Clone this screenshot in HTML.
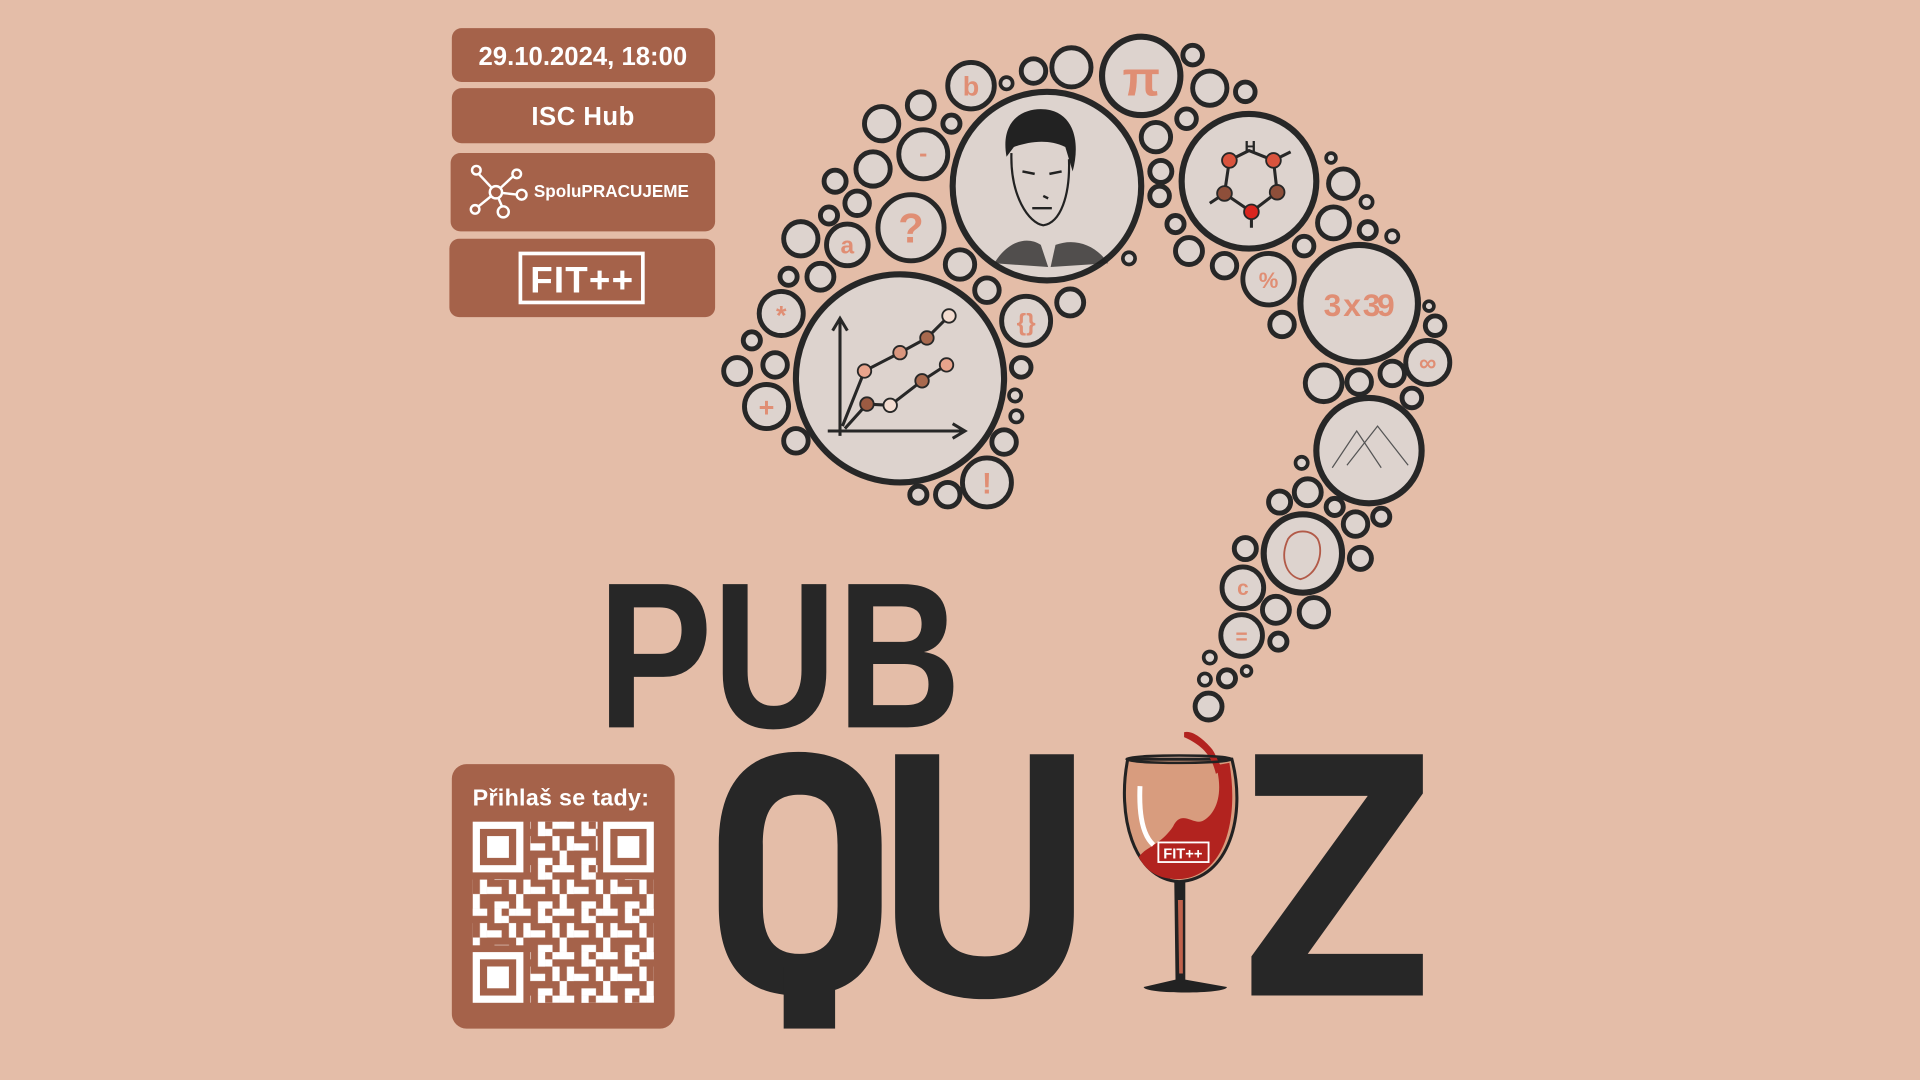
<!DOCTYPE html>
<html><head><meta charset="utf-8"><style>
html,body{margin:0;padding:0;background:#E4BDA8;}
svg{display:block}
text{font-family:"Liberation Sans",sans-serif;font-weight:bold}
</style></head><body>
<svg width="1920" height="1080" viewBox="0 0 1568 882" xmlns="http://www.w3.org/2000/svg">
<defs>
<pattern id="qp" x="386" y="671" width="35.52" height="35.52" patternUnits="userSpaceOnUse">
<g fill="#fff">
<rect x="0" y="0" width="11.9" height="5.9"/><rect x="17.8" y="0" width="5.9" height="11.9"/><rect x="29.6" y="0" width="5.9" height="5.9"/>
<rect x="5.9" y="11.8" width="5.9" height="11.9"/><rect x="11.8" y="17.7" width="11.9" height="5.9"/><rect x="29.6" y="11.8" width="5.9" height="11.9"/>
<rect x="0" y="23.6" width="5.9" height="11.9"/><rect x="17.8" y="29.6" width="11.9" height="5.9"/><rect x="23.7" y="5.9" width="5.9" height="5.9"/>
</g>
</pattern>
</defs>
<rect width="1568" height="882" fill="#E4BDA8"/>
<!-- left boxes -->
<g fill="#A5624A">
<rect x="369" y="23" width="215" height="44" rx="8"/>
<rect x="369" y="72" width="215" height="45" rx="8"/>
<rect x="368" y="125" width="216" height="64" rx="8"/>
<rect x="367" y="195" width="217" height="64" rx="8"/>
<rect x="369" y="624" width="182" height="216" rx="12"/>
</g>
<text x="476" y="53" font-size="21" fill="#fff" text-anchor="middle">29.10.2024, 18:00</text>
<text x="476" y="102" font-size="21" fill="#fff" text-anchor="middle" textLength="84">ISC Hub</text>
<g stroke="#fff" stroke-width="2" fill="none">
<line x1="390" y1="141" x2="405" y2="157"/><line x1="405" y1="157" x2="420" y2="143"/><line x1="405" y1="157" x2="389" y2="170"/><line x1="405" y1="157" x2="423" y2="159"/><line x1="405" y1="157" x2="411" y2="171"/>
<circle cx="389" cy="139" r="3.5" fill="#A5624A"/><circle cx="422" cy="142" r="3.5" fill="#A5624A"/><circle cx="405" cy="157" r="5" fill="#A5624A"/><circle cx="426" cy="159" r="4" fill="#A5624A"/><circle cx="388" cy="171" r="3.5" fill="#A5624A"/><circle cx="411" cy="173" r="4.5" fill="#A5624A"/>
</g>
<text x="436" y="161" font-size="14" fill="#fff">SpoluPRACUJEME</text>
<rect x="425" y="207" width="100" height="40" fill="none" stroke="#fff" stroke-width="3"/>
<text x="475" y="239" font-size="30" fill="#fff" text-anchor="middle" font-weight="normal" textLength="84">FIT++</text>
<text x="458" y="658" font-size="19" fill="#fff" text-anchor="middle" textLength="144">Přihlaš se tady:</text>
<!-- QR -->
<rect x="386" y="671" width="148" height="148" fill="url(#qp)"/>
<g fill="#A5624A"><rect x="384" y="669" width="49" height="49"/><rect x="488" y="669" width="48" height="49"/><rect x="384" y="772" width="49" height="49"/></g>
<g fill="none" stroke="#fff" stroke-width="5.9">
<rect x="389" y="674" width="35.5" height="35.5"/><rect x="495.5" y="674" width="35.5" height="35.5"/><rect x="389" y="780.5" width="35.5" height="35.5"/>
</g>
<g fill="#fff"><rect x="397.8" y="682.8" width="17.8" height="17.8"/><rect x="504.3" y="682.8" width="17.8" height="17.8"/><rect x="397.8" y="789.3" width="17.8" height="17.8"/></g>

<!-- bubbles -->
<g stroke="#272727" fill="#DDD3CE" stroke-width="5">
<circle cx="735" cy="309" r="85"/><circle cx="855" cy="152" r="77"/><circle cx="1020" cy="148" r="55"/><circle cx="1110" cy="248" r="48"/><circle cx="1118" cy="368" r="43"/><circle cx="1064" cy="452" r="32"/><circle cx="932" cy="62" r="32"/>
</g>
<g stroke="#272727" fill="#DDD3CE" stroke-width="4">
<circle cx="744" cy="186" r="27"/><circle cx="793" cy="70" r="19"/><circle cx="754" cy="126" r="20"/><circle cx="692" cy="200" r="17"/><circle cx="638" cy="256" r="18"/><circle cx="626" cy="332" r="18"/><circle cx="838" cy="262" r="20"/><circle cx="806" cy="394" r="20"/><circle cx="1036" cy="228" r="21"/><circle cx="1166" cy="296" r="18"/><circle cx="1015" cy="480" r="17"/><circle cx="1014" cy="519" r="17"/>
<circle cx="875" cy="55" r="16"/><circle cx="844" cy="58" r="10"/><circle cx="720" cy="101" r="14"/><circle cx="752" cy="86" r="11"/><circle cx="713" cy="138" r="14"/><circle cx="682" cy="148" r="9"/><circle cx="700" cy="166" r="10"/><circle cx="654" cy="195" r="14"/><circle cx="670" cy="226" r="11"/><circle cx="633" cy="298" r="10"/><circle cx="602" cy="303" r="11"/><circle cx="650" cy="360" r="10"/><circle cx="774" cy="404" r="10"/><circle cx="820" cy="361" r="10"/><circle cx="834" cy="300" r="8"/><circle cx="806" cy="237" r="10"/><circle cx="784" cy="216" r="12"/><circle cx="874" cy="247" r="11"/><circle cx="944" cy="112" r="12"/><circle cx="948" cy="140" r="9"/><circle cx="947" cy="160" r="8"/><circle cx="971" cy="205" r="11"/><circle cx="1000" cy="217" r="10"/><circle cx="974" cy="45" r="8"/><circle cx="988" cy="72" r="14"/><circle cx="1017" cy="75" r="8"/><circle cx="969" cy="97" r="8"/><circle cx="1097" cy="150" r="12"/><circle cx="1089" cy="182" r="13"/><circle cx="1117" cy="188" r="7"/><circle cx="1065" cy="201" r="8"/><circle cx="1047" cy="265" r="10"/><circle cx="1081" cy="313" r="15"/><circle cx="1110" cy="312" r="10"/><circle cx="1137" cy="305" r="10"/><circle cx="1153" cy="325" r="8"/><circle cx="1172" cy="266" r="8"/><circle cx="1068" cy="402" r="11"/><circle cx="1045" cy="410" r="9"/><circle cx="1090" cy="414" r="7"/><circle cx="1107" cy="428" r="10"/><circle cx="1128" cy="422" r="7"/><circle cx="1111" cy="456" r="9"/><circle cx="1017" cy="448" r="9"/><circle cx="1042" cy="498" r="11"/><circle cx="1073" cy="500" r="12"/><circle cx="1044" cy="524" r="7"/><circle cx="1002" cy="554" r="7"/><circle cx="987" cy="577" r="11"/><circle cx="960" cy="183" r="7"/><circle cx="777" cy="101" r="7"/><circle cx="677" cy="176" r="7"/><circle cx="644" cy="226" r="7"/><circle cx="614" cy="278" r="7"/><circle cx="750" cy="404" r="7"/>
</g>
<g stroke="#272727" fill="#DDD3CE" stroke-width="3">
<circle cx="822" cy="68" r="5"/><circle cx="830" cy="340" r="5"/><circle cx="829" cy="323" r="5"/><circle cx="922" cy="211" r="5"/><circle cx="1087" cy="129" r="4"/><circle cx="1116" cy="165" r="5"/><circle cx="1137" cy="193" r="5"/><circle cx="1167" cy="250" r="4"/><circle cx="1063" cy="378" r="5"/><circle cx="988" cy="537" r="5"/><circle cx="1018" cy="548" r="4"/><circle cx="984" cy="555" r="5"/>
</g>

<!-- graph -->
<g stroke="#272727" stroke-width="2.5" fill="none">
<line x1="686" y1="262" x2="686" y2="356"/><polyline points="680,270 686,260 692,270"/>
<line x1="676" y1="352" x2="786" y2="352"/><polyline points="778,346 788,352 778,358"/>
<polyline points="688,348 706,303 735,288 757,276 775,258"/>
<polyline points="690,350 708,330 727,331 753,311 773,298"/>
</g>
<g stroke="#272727" stroke-width="1.5">
<circle cx="706" cy="303" r="5.5" fill="#E9A48C"/><circle cx="735" cy="288" r="5.5" fill="#D9967E"/><circle cx="757" cy="276" r="5.5" fill="#A8694E"/><circle cx="775" cy="258" r="5.5" fill="#F3DCD0"/>
<circle cx="708" cy="330" r="5.5" fill="#9C5B42"/><circle cx="727" cy="331" r="5.5" fill="#F3DCD0"/><circle cx="753" cy="311" r="5.5" fill="#A8694E"/><circle cx="773" cy="298" r="5.5" fill="#E9A48C"/>
</g>
<!-- kafka approx -->
<g fill="#222">
<path d="M822,128 C816,95 840,86 858,90 C878,95 882,118 876,140 L870,120 C855,113 840,116 828,120 Z"/>
<path d="M826,125 C825,160 840,182 852,184 C866,182 874,160 873,130" fill="none" stroke="#222" stroke-width="1.8"/>
<path d="M812,215 C822,198 838,192 850,200 L856,218 Z M905,215 C895,200 878,194 862,200 L858,218 Z" opacity="0.75"/>
<path d="M835,140 l10,2 M857,142 l10,-2 M852,160 l4,2 M843,170 l16,0" stroke="#222" stroke-width="2"/>
</g>
<!-- molecule -->
<g stroke="#272727" stroke-width="2.5" fill="none">
<polyline points="1004,131 1020,123 1040,131 1043,157 1022,173 1000,158 1004,131"/>
<line x1="1040" y1="131" x2="1054" y2="124"/><line x1="1000" y1="158" x2="988" y2="166"/><line x1="1022" y1="173" x2="1022" y2="186"/>
</g>
<text x="1021" y="124" font-size="13" fill="#272727" text-anchor="middle">H</text>
<g stroke="#272727" stroke-width="1.5"><circle cx="1004" cy="131" r="6" fill="#D9533D"/><circle cx="1040" cy="131" r="6" fill="#D9533D"/><circle cx="1000" cy="158" r="6" fill="#8E4F3A"/><circle cx="1043" cy="157" r="6" fill="#8E4F3A"/><circle cx="1022" cy="173" r="6" fill="#D9251E"/></g>
<!-- pyramids & heart -->
<path d="M1088,382 L1108,352 L1128,382 M1100,380 L1125,348 L1150,380" stroke="#555" stroke-width="1" fill="none"/>
<path d="M1052,440 C1045,455 1050,470 1062,473 C1075,470 1082,452 1076,440 C1070,432 1058,432 1052,440 Z" stroke="#B25A48" stroke-width="1.5" fill="none"/>
<!-- symbol labels -->
<g fill="#E08E74" text-anchor="middle">
<text x="932" y="78" font-size="40">π</text>
<text x="744" y="198" font-size="34">?</text>
<text x="793" y="78" font-size="22">b</text>
<text x="754" y="132" font-size="20">-</text>
<text x="692" y="207" font-size="20">a</text>
<text x="638" y="265" font-size="22">*</text>
<text x="626" y="340" font-size="22">+</text>
<text x="838" y="270" font-size="20">{}</text>
<text x="806" y="403" font-size="24">!</text>
<text x="1036" y="235" font-size="18">%</text>
<text x="1110" y="258" font-size="26" textLength="58">3 x 39</text>
<text x="1166" y="303" font-size="20">∞</text>
<text x="1015" y="486" font-size="17">c</text>
<text x="1014" y="526" font-size="17">=</text>
</g>

<!-- PUB -->
<text x="488" y="594" font-size="170" fill="#272727" textLength="297" lengthAdjust="spacingAndGlyphs">PUB</text>
<!-- QUIZ -->
<path fill="#272727" fill-rule="evenodd" d="M652,614 C610,614 587,640 587,690 L587,740 C587,790 610,813 652,813 C697,813 720,790 720,740 L720,690 C720,640 697,614 652,614 Z M653,649 C632,649 623,662 623,690 L623,740 C623,766 632,779 653,779 C675,779 684,766 684,740 L684,690 C684,662 675,649 653,649 Z"/>
<rect x="640" y="790" width="42" height="50" fill="#272727"/>
<path fill="#272727" d="M731,616 L767,616 L767,740 C767,768 778,781 804,781 C830,781 841,768 841,740 L841,616 L877,616 L877,745 C877,792 852,816 804,816 C756,816 731,792 731,745 Z"/>
<path fill="#272727" d="M1025,616 L1162,616 L1162,648 L1068,779 L1162,779 L1162,813 L1022,813 L1022,781 L1117,650 L1025,650 Z"/>
<!-- glass -->
<path d="M921,620 C912,665 925,718 963,720 C1004,718 1018,665 1006,620 Z" fill="#D89C7E" stroke="#222" stroke-width="2.5"/>
<path d="M993,625 C1000,650 992,665 983,670 C975,675 965,660 958,675 C948,690 935,692 930,700 C938,715 950,718 963,718 C1000,716 1012,670 1004,623 Z" fill="#B2231F"/>
<path d="M967,598 C975,596 985,606 990,612 C994,618 994,622 999,628 L993,632 C990,620 985,610 967,602 Z" fill="#B2231F"/>
<path d="M931,642 C930,665 933,682 942,690" stroke="#fff" stroke-width="4" fill="none"/>
<ellipse cx="963" cy="620" rx="43" ry="3" fill="none" stroke="#222" stroke-width="2"/>
<rect x="946" y="688" width="41" height="16" fill="none" stroke="#fff" stroke-width="1.5"/>
<text x="966" y="701" font-size="12" fill="#fff" text-anchor="middle" font-weight="normal">FIT++</text>
<path d="M959,720 L960,800 L934,806 C934,812 1002,812 1002,806 L968,800 L968,720 Z" fill="#222"/>
<path d="M962,735 L963,795 L966,795 L966,735 Z" fill="#C0624C"/>
</svg>
</body></html>
